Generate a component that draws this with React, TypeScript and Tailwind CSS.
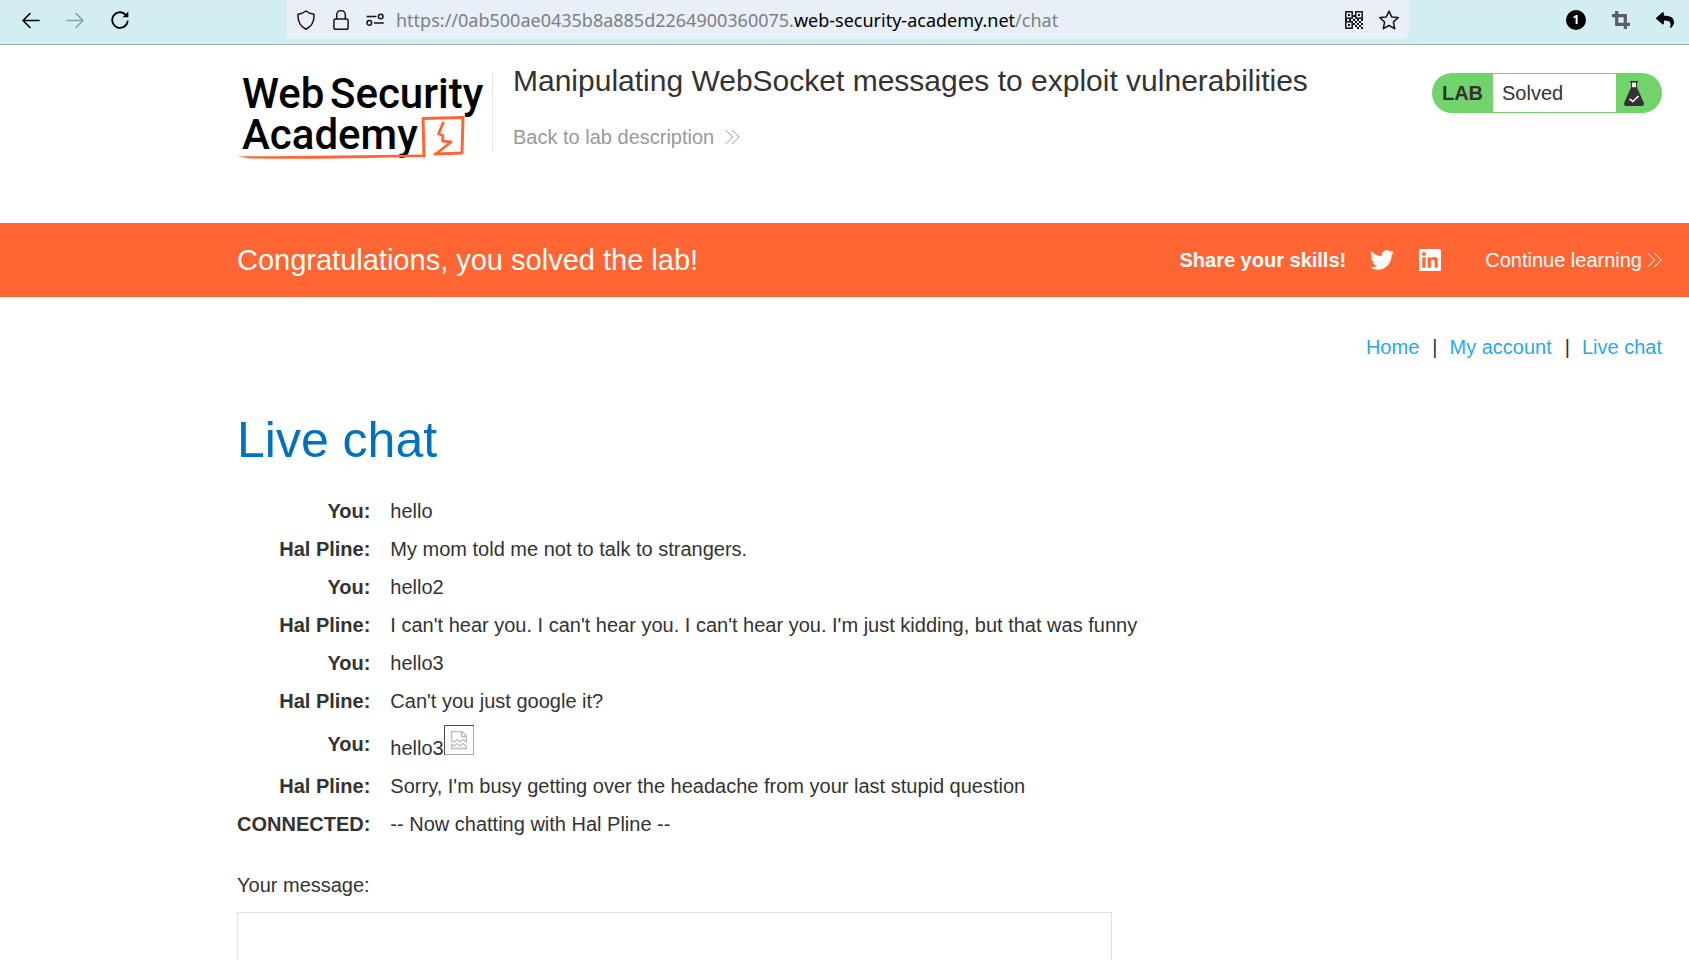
import React from 'react';
import { FaReply } from 'react-icons/fa';

type IconProps = { className?: string };

const BackArrow = ({ className }: IconProps) => (
  <svg viewBox="0 0 18 18" className={className} fill="none" stroke="currentColor" strokeWidth="1.6">
    <path d="M17 9.500H1M8 2.500L1 9.500L8 16.500" strokeLinecap="round" strokeLinejoin="round" />
  </svg>
);

const ForwardArrow = ({ className }: IconProps) => (
  <svg viewBox="0 0 18 18" className={className} fill="none" stroke="currentColor" strokeWidth="1.4">
    <path d="M1 9.500H17M10 2.500L17 9.500L10 16.500" strokeLinecap="round" strokeLinejoin="round" />
  </svg>
);

const ReloadIcon = () => (
  <svg viewBox="0 0 20 20" className="size-5" fill="none" stroke="#000" strokeWidth="1.8">
    <path d="M15.200 4.300A7.800 7.800 0 1 0 17.600 11.500" strokeLinecap="round" />
    <path d="M18.300 1.500V7.300H12.500Z" fill="#000" stroke="none" />
  </svg>
);

const ShieldIcon = () => (
  <svg viewBox="0 0 20 20" className="size-5" fill="none" stroke="#15141a" strokeWidth="1.5" strokeLinejoin="round">
    <path d="M10 1C12 2.600 15 3.800 18 4.300C18.300 10.500 16 16.500 10 19.200C4 16.500 1.700 10.500 2 4.300C5 3.800 8 2.600 10 1Z" />
  </svg>
);

const LockIcon = () => (
  <svg viewBox="0 0 16 20" className="h-5 w-4" fill="none" stroke="#15141a" strokeWidth="1.5">
    <rect x="0.900" y="9" width="14.200" height="10.200" rx="1.800" />
    <path d="M3.700 9V4.800A4.300 4.300 0 0 1 12.300 4.800V9" />
  </svg>
);

const PermissionsIcon = () => (
  <svg viewBox="0 0 18 14" className="h-[14px] w-[18px]" fill="none" stroke="#15141a" strokeWidth="1.5">
    <path d="M0.500 3.500H10.500M8 9.900H17.800" />
    <circle cx="14.700" cy="3.500" r="2.300" />
    <circle cx="3.300" cy="9.900" r="2.300" />
  </svg>
);

const QrIcon = () => (
  <svg viewBox="0 0 18 18" className="size-[18px]" fill="#15141a">
    <g fill="none" stroke="#15141a" strokeWidth="1.500">
      <rect x="0.800" y="0.800" width="6.400" height="6.400" />
      <rect x="10.800" y="0.800" width="6.400" height="6.400" />
      <rect x="0.800" y="10.800" width="6.400" height="6.400" />
    </g>
    <path d="M3 3h2v2H3zM13 3h2v2h-2zM3 13h2v2H3zM8 4h2v2H8zM0 8h2v2H0zM4 8h2v2H4zM8 8h2v2H8zM12 8h2v2h-2zM16 8h2v2h-2zM10 10h2v2h-2zM14 10h2v2h-2zM8 12h2v2H8zM12 12h2v2h-2zM16 12h2v2h-2zM10 14h2v2h-2zM14 14h2v2h-2zM12 16h2v2h-2zM16 16h2v2h-2z" />
  </svg>
);

const StarIcon = () => (
  <svg viewBox="0 0 20 20" className="size-5" fill="none" stroke="#15141a" strokeWidth="1.5" strokeLinejoin="round">
    <path d="M10 1.100L12.700 6.900L19.100 7.600L14.400 12L15.700 18.700L10 15.500L4.300 18.700L5.600 12L0.900 7.600L7.300 6.900Z" />
  </svg>
);

const CropIcon = () => (
  <svg viewBox="0 0 18 18" className="size-[18px]" fill="none" stroke="#5b5b66" strokeWidth="3.200">
    <path d="M4.700 0V13.300H18M0 4.700H13.300V18" />
  </svg>
);

const Chevrons = () => (
  <svg viewBox="0 0 15 16" className="h-4 w-[15px]" fill="none" stroke="currentColor" strokeWidth="1">
    <path d="M0.700 1L7.700 8L0.700 15M7.200 1L14.200 8L7.200 15" />
  </svg>
);

const TwitterIcon = () => (
  <svg viewBox="0 0 24 24" className="size-6" fill="#fff">
    <path d="M23.950 4.570a10 10 0 0 1-2.820.77 4.960 4.960 0 0 0 2.160-2.720c-.95.550-2 .95-3.130 1.190a4.920 4.920 0 0 0-8.390 4.480C7.690 8.090 4.070 6.130 1.640 3.160a4.920 4.920 0 0 0 1.520 6.570 4.900 4.900 0 0 1-2.230-.61v.06a4.920 4.920 0 0 0 3.950 4.830 5 5 0 0 1-2.210.08 4.940 4.940 0 0 0 4.600 3.420A9.870 9.870 0 0 1 0 19.540a14 14 0 0 0 7.550 2.210c9.050 0 14-7.500 14-13.980 0-.21 0-.42-.02-.63a9.940 9.940 0 0 0 2.420-2.570z" />
  </svg>
);

const LinkedInIcon = () => (
  <svg viewBox="0 0 22 22" className="size-[22px]">
    <rect width="22" height="22" rx="1.500" fill="#fff" />
    <path d="M3.300 8.300H6.500V18.700H3.300ZM8.600 8.300H11.700V9.800C12.300 8.700 13.500 8 15 8C18 8 18.800 9.900 18.800 12.700V18.700H15.600V13.400C15.600 12 15.400 10.800 13.900 10.800C12.300 10.800 11.800 11.900 11.800 13.400V18.700H8.600Z" fill="#ff6633" />
    <circle cx="4.900" cy="5" r="1.900" fill="#ff6633" />
  </svg>
);

const FlaskIcon = () => (
  <svg viewBox="0 0 20 25" className="h-[25px] w-5">
    <path d="M7.500 1.500H12.500V6.500H7.500Z" fill="#fff" />
    <path d="M6 0H14V1.500H13V6.500L19.700 21.500C20.400 23.300 19.500 25 17.600 25H2.400C0.500 25 -0.400 23.300 0.300 21.500L7 6.500V1.500H6ZM8 1.500V6.200H12V1.500Z" fill="#333332" fillRule="evenodd" />
    <path d="M5.500 17.800L8.800 20.500L14.500 15" fill="none" stroke="#fff" strokeWidth="1.500" />
  </svg>
);

const BrokenImage = () => (
  <svg viewBox="0 0 30 30" role="img" aria-label="Broken image" className="inline-block size-[30px] align-baseline" fill="none">
    <path d="M0.500 29.500H29.500V0.500" stroke="#a9a9a9" />
    <path d="M0.500 30V0.500H30" stroke="#4a4a4a" />
    <g stroke="#b9b9b9" strokeWidth="1.300">
      <path d="M7.600 16V6.600H18L22.300 11V17L19 14.500L16 17L13 14.500L10 17Z" />
      <path d="M17.500 6.600V11.500H22" />
      <path d="M7.600 23.500V19.500L10 21L13 18.500L16 21L19 18.500L22.300 21V23.500Z" />
    </g>
  </svg>
);

const Logo = () => (
  <svg viewBox="12 10 250 94" className="h-[94px] w-[250px] shrink-0">
    <g fill="#000" className="font-['Roboto',sans-serif] text-[42px] font-medium">
      <text x="17" y="48">Web</text>
      <text x="105" y="48">Security</text>
      <text x="17" y="89">Academy</text>
    </g>
    <g fill="none" stroke="#ff6633">
      <path d="M199 96L198 58.500L238 57.500L237 93L210 94" strokeWidth="3" strokeLinejoin="round" strokeLinecap="round" />
      <path d="M218.500 62L213.500 74L218 75.500L217.500 81L226 82L211 94" strokeWidth="2.800" strokeLinejoin="round" />
    </g>
    <path d="M12.500 96.500C70 96 140 95.500 199 94.500V97C140 98 70 99.500 25 98.500Z" fill="#ff6633" />
  </svg>
);

const messages: { from: string; text: string; image?: boolean }[] = [
  { from: 'You:', text: 'hello' },
  { from: 'Hal Pline:', text: 'My mom told me not to talk to strangers.' },
  { from: 'You:', text: 'hello2' },
  { from: 'Hal Pline:', text: "I can't hear you. I can't hear you. I can't hear you. I'm just kidding, but that was funny" },
  { from: 'You:', text: 'hello3' },
  { from: 'Hal Pline:', text: "Can't you just google it?" },
  { from: 'You:', text: 'hello3', image: true },
  { from: 'Hal Pline:', text: "Sorry, I'm busy getting over the headache from your last stupid question" },
  { from: 'CONNECTED:', text: '-- Now chatting with Hal Pline --' },
];

function BrowserBar() {
  return (
    <div className="flex h-[45px] shrink-0 items-start border-b border-[#95a9ac] bg-[#d2eef2]">
      <div className="flex h-[39px] w-[286px] shrink-0 items-center gap-[26px] pl-[22px]">
        <button type="button" aria-label="Back"><BackArrow className="size-[18px] text-black" /></button>
        <button type="button" aria-label="Forward"><ForwardArrow className="size-[18px] text-[#8d9ba0]" /></button>
        <button type="button" aria-label="Reload"><ReloadIcon /></button>
      </div>
      <div className="flex h-[39px] min-w-0 flex-1 items-center rounded-b-[4px] bg-[#e8eff6] px-[10px]">
        <div className="flex items-center gap-[17px]">
          <ShieldIcon />
          <LockIcon />
          <PermissionsIcon />
        </div>
        <p className="ml-3 flex-1 truncate font-['Noto_Sans',sans-serif] text-[18px] text-[#7c8084]">
          https://0ab500ae0435b8a885d2264900360075.<span className="text-black">web-security-academy.net</span>/chat
        </p>
        <div className="flex items-center gap-4">
          <button type="button" aria-label="QR code"><QrIcon /></button>
          <button type="button" aria-label="Bookmark"><StarIcon /></button>
        </div>
      </div>
      <div className="flex h-[39px] w-[280px] shrink-0 items-center justify-end gap-[26px] pr-[15px]">
        <button type="button" aria-label="One notification" className="flex size-5 items-center justify-center rounded-full bg-black font-['Noto_Sans',sans-serif] text-xs font-bold text-white">1</button>
        <button type="button" aria-label="Crop"><CropIcon /></button>
        <button type="button" aria-label="Undo"><FaReply className="size-[18px] text-black" /></button>
      </div>
    </div>
  );
}

export default function App() {
  return (
    <div className="flex h-screen flex-col overflow-hidden bg-white font-['Liberation_Sans',Arial,sans-serif] text-[20px] leading-7 text-[#333332]">
      <BrowserBar />

      <header className="flex h-[178px] shrink-0 items-start pt-[18px] pr-[27px] pl-[237px]">
        <div className="mt-[7px] flex shrink-0 items-start gap-[5px]">
          <Logo />
          <div className="mt-[3px] h-[78px] w-px bg-[#e6e6e6]" />
        </div>
        <div className="-mt-[3px] flex-1 pl-5">
          <h2 className="text-[30px] leading-[42px]">Manipulating WebSocket messages to exploit vulnerabilities</h2>
          <a href="#description" className="mt-[21px] inline-flex items-center gap-[11px] text-[#999999]">
            Back to lab description <Chevrons />
          </a>
        </div>
        <div className="mt-[10px] flex h-10 w-[230px] shrink-0 items-stretch overflow-hidden rounded-[20px] bg-[#72d26c] py-px">
          <span className="flex w-[61px] items-center justify-center font-bold">LAB</span>
          <span className="flex flex-1 items-center bg-white pl-[9px]">Solved</span>
          <span className="flex w-[46px] items-center pl-2"><FlaskIcon /></span>
        </div>
      </header>

      <section className="flex h-[74px] shrink-0 items-center bg-[#ff6633] pr-[27px] pl-[237px] text-white">
        <h3 className="flex-1 text-[29px]">Congratulations, you solved the lab!</h3>
        <span className="font-bold">Share your skills!</span>
        <a href="#twitter" aria-label="Share on Twitter" className="ml-6"><TwitterIcon /></a>
        <a href="#linkedin" aria-label="Share on LinkedIn" className="ml-[25px]"><LinkedInIcon /></a>
        <a href="#continue" className="ml-11 flex items-center gap-[5px]">Continue learning <Chevrons /></a>
      </section>

      <main className="flex min-h-0 flex-1 flex-col pr-[27px] pl-[237px]">
        <nav className="mt-9 flex justify-end gap-3">
          <a href="#home" className="text-[#29a9e8]">Home</a>
          <span className="pl-px">|</span>
          <a href="#account" className="text-[#29a9e8]">My account</a>
          <span className="pl-px">|</span>
          <a href="#chat" className="text-[#29a9e8]">Live chat</a>
        </nav>
        <h1 className="mt-11 text-[50px] leading-[70px] text-[#0071bc]">Live chat</h1>
        <table className="mt-[17px] self-start border-collapse">
          <tbody>
            {messages.map((m, i) => (
              <tr key={i}>
                <th scope="row" className="py-[5px] pr-5 text-right align-middle font-bold">{m.from}</th>
                <td className="py-[5px] align-middle">{m.text}{m.image && <BrokenImage />}</td>
              </tr>
            ))}
          </tbody>
        </table>
        <label htmlFor="message" className="mt-[28px]">Your message:</label>
        <textarea id="message" className="mt-[13px] h-[200px] w-[875px] max-w-full shrink-0 resize-none border border-[#e0e0e0] p-2 outline-none" />
      </main>
    </div>
  );
}
